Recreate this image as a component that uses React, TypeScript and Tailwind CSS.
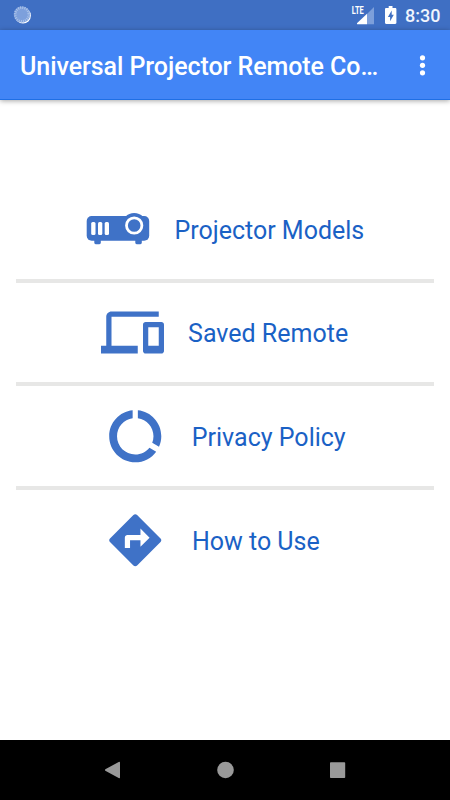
import React from 'react';

const BLUE = '#3f72c7';

function SpinnerIcon() {
  return (
    <svg width="20" height="20" viewBox="0 0 20 20">
      <circle cx="10" cy="10.600" r="7.900" fill="#fff" />
      <circle cx="9" cy="9.500" r="8.100" fill="#7da0dc" />
      <circle cx="9" cy="9.500" r="6.900" fill="none" stroke="#a9c1e8" strokeWidth="2.600" strokeDasharray="1.100 1.070" />
    </svg>
  );
}

function SignalIcon() {
  return (
    <svg width="24" height="22" viewBox="351 4 24 22">
      <path d="M374 7v17.200h-7V14z" fill="#7d9fda" />
      <path d="M367 13.800v10.400h-9.200c-.9 0-1.100-.7-.6-1.300z" fill="#fff" />
      <text x="351.800" y="14" fill="#fff" fontSize="10.800" fontWeight="700" textLength="12" lengthAdjust="spacingAndGlyphs">
        LTE
      </text>
    </svg>
  );
}

function BatteryIcon() {
  return (
    <svg width="12" height="20" viewBox="0 0 12 20">
      <path
        fill="#fff"
        fillRule="evenodd"
        d="M3.700 1h3.800v2h2.700c.7 0 1.200.5 1.200 1.200v13.600c0 .7-.5 1.200-1.200 1.200H1.200C.5 19 0 18.500 0 17.800V4.200C0 3.500.5 3 1.200 3h2.500zM6.700 5.500L2.900 12h2.200v4.300l3.700-6.600H6.700z"
      />
    </svg>
  );
}

function ProjectorIcon() {
  return (
    <svg width="64" height="36" viewBox="86 211 64 36" fill={BLUE}>
      <rect x="86.700" y="216" width="62.500" height="24.800" rx="5" />
      <circle cx="134.200" cy="225.500" r="12.500" />
      <path d="M94.300 240h6.500v2.800q0 1.400-1.400 1.400h-3.700q-1.400 0-1.400-1.400zM135.300 240h6.500v2.800q0 1.400-1.400 1.400h-3.700q-1.400 0-1.400-1.400z" />
      <circle cx="134.200" cy="225.500" r="7.700" fill="none" stroke="#fff" strokeWidth="2.800" />
      <g fill="#fff">
        <rect x="91.200" y="222" width="4.300" height="13" rx="1.500" />
        <rect x="98" y="222" width="4.300" height="13" rx="1.500" />
        <rect x="104.700" y="222" width="4.300" height="13" rx="1.500" />
      </g>
    </svg>
  );
}

function MaterialIcon({ d, size }: { d: string; size: number }) {
  return (
    <svg width={size} height={size} viewBox="0 0 24 24" fill={BLUE}>
      <path d={d} />
    </svg>
  );
}

const DEVICES =
  'M4 6h18V4H4c-1.100 0-2 .9-2 2v11H0v3h14v-3H4V6zm19 2h-6c-.55 0-1 .45-1 1v10c0 .55.45 1 1 1h6c.55 0 1-.45 1-1V9c0-.55-.45-1-1-1zm-1 9h-4v-7h4v7z';
const USAGE =
  'M13 2.050v3.030c3.390.49 6 3.390 6 6.920 0 .9-.18 1.750-.48 2.540l2.600 1.530c.56-1.240.88-2.620.88-4.070 0-5.180-3.950-9.450-9-9.950zM12 19c-3.870 0-7-3.130-7-7 0-3.530 2.610-6.430 6-6.920V2.050c-5.060.5-9 4.760-9 9.950 0 5.520 4.470 10 9.990 10 3.310 0 6.240-1.610 8.060-4.090l-2.600-1.530C16.170 17.980 14.210 19 12 19z';
const DIRECTIONS =
  'M21.710 11.290l-9-9c-.39-.39-1.020-.39-1.410 0l-9 9c-.39.39-.39 1.020 0 1.410l9 9c.39.39 1.020.39 1.410 0l9-9c.39-.38.39-1.010 0-1.410zM14 14.500V12h-4v3H8v-4c0-.55.45-1 1-1h5V7.500l3.500 3.500-3.500 3.500z';

function Row({ icon, label, pad, gap }: { icon: React.ReactNode; label: string; pad: string; gap: string }) {
  return (
    <div className={`flex h-[99.75px] items-center ${pad} ${gap}`}>
      {icon}
      <span className="mt-[4px] whitespace-nowrap text-[25px] leading-[30px] text-[#1a61c5]">{label}</span>
    </div>
  );
}

function Divider() {
  return <div className="mx-4 h-1 shrink-0 bg-[#e7e7e6]" />;
}

export default function App() {
  return (
    <div className="flex h-[800px] w-[450px] flex-col overflow-hidden bg-white font-[Roboto,sans-serif]">
      <div className="flex h-[30px] items-center bg-[#3f6fc3] pl-[13px] pr-[10px]">
        <SpinnerIcon />
        <div className="ml-auto flex items-center">
          <SignalIcon />
          <div className="ml-[10px]"><BatteryIcon /></div>
          <span className="ml-2 w-[35px] whitespace-nowrap pt-px text-[18px] font-medium leading-[30px] text-[#f0f5fd]">8:30</span>
        </div>
      </div>
      <header className="z-10 flex h-[70px] items-center justify-between border-b border-[#1f6fe5] bg-[#4285f6] pl-5 pr-[23px] shadow-[0_1px_5px_rgba(0,0,0,0.35)]">
        <h1 className="mt-[5px] whitespace-nowrap text-[25px] font-medium leading-[30px] tracking-[-0.06px] text-white">Universal Projector Remote Co…</h1>
        <svg width="9" height="24" viewBox="0 0 9 24" fill="#fff">
          <circle cx="4.500" cy="4.800" r="2.600" />
          <circle cx="4.500" cy="12.300" r="2.600" />
          <circle cx="4.500" cy="19.800" r="2.600" />
        </svg>
      </header>
      <main className="grow pt-[78.85px]">
        <Row pad="pl-[86px]" gap="gap-[24.4px]" icon={<ProjectorIcon />} label="Projector Models" />
        <Divider />
        <Row pad="pl-[100.6px]" gap="gap-[24.5px]" icon={<MaterialIcon d={DEVICES} size={63} />} label="Saved Remote" />
        <Divider />
        <Row pad="pl-[104.3px]" gap="gap-[25px]" icon={<MaterialIcon d={USAGE} size={62.5} />} label="Privacy Policy" />
        <Divider />
        <Row pad="pl-[104.4px]" gap="gap-[25px]" icon={<MaterialIcon d={DIRECTIONS} size={62.5} />} label="How to Use" />
      </main>
      <nav className="flex h-[60px] items-center justify-between bg-black pl-[105px] pr-[104px]">
        <svg width="16" height="18" viewBox="0 0 16 18" fill="#999">
          <path d="M.3 8.200 13.700 1Q15 .4 15 1.700v14.600q0 1.300-1.300.6L.3 9.800q-.6-.8 0-1.600z" />
        </svg>
        <svg width="18" height="18" viewBox="0 0 18 18" fill="#999">
          <circle cx="8.500" cy="9" r="8.300" />
        </svg>
        <svg width="16" height="18" viewBox="0 0 16 18" fill="#999">
          <rect x="0" y="1.200" width="15.200" height="15.800" rx="0.800" />
        </svg>
      </nav>
    </div>
  );
}
